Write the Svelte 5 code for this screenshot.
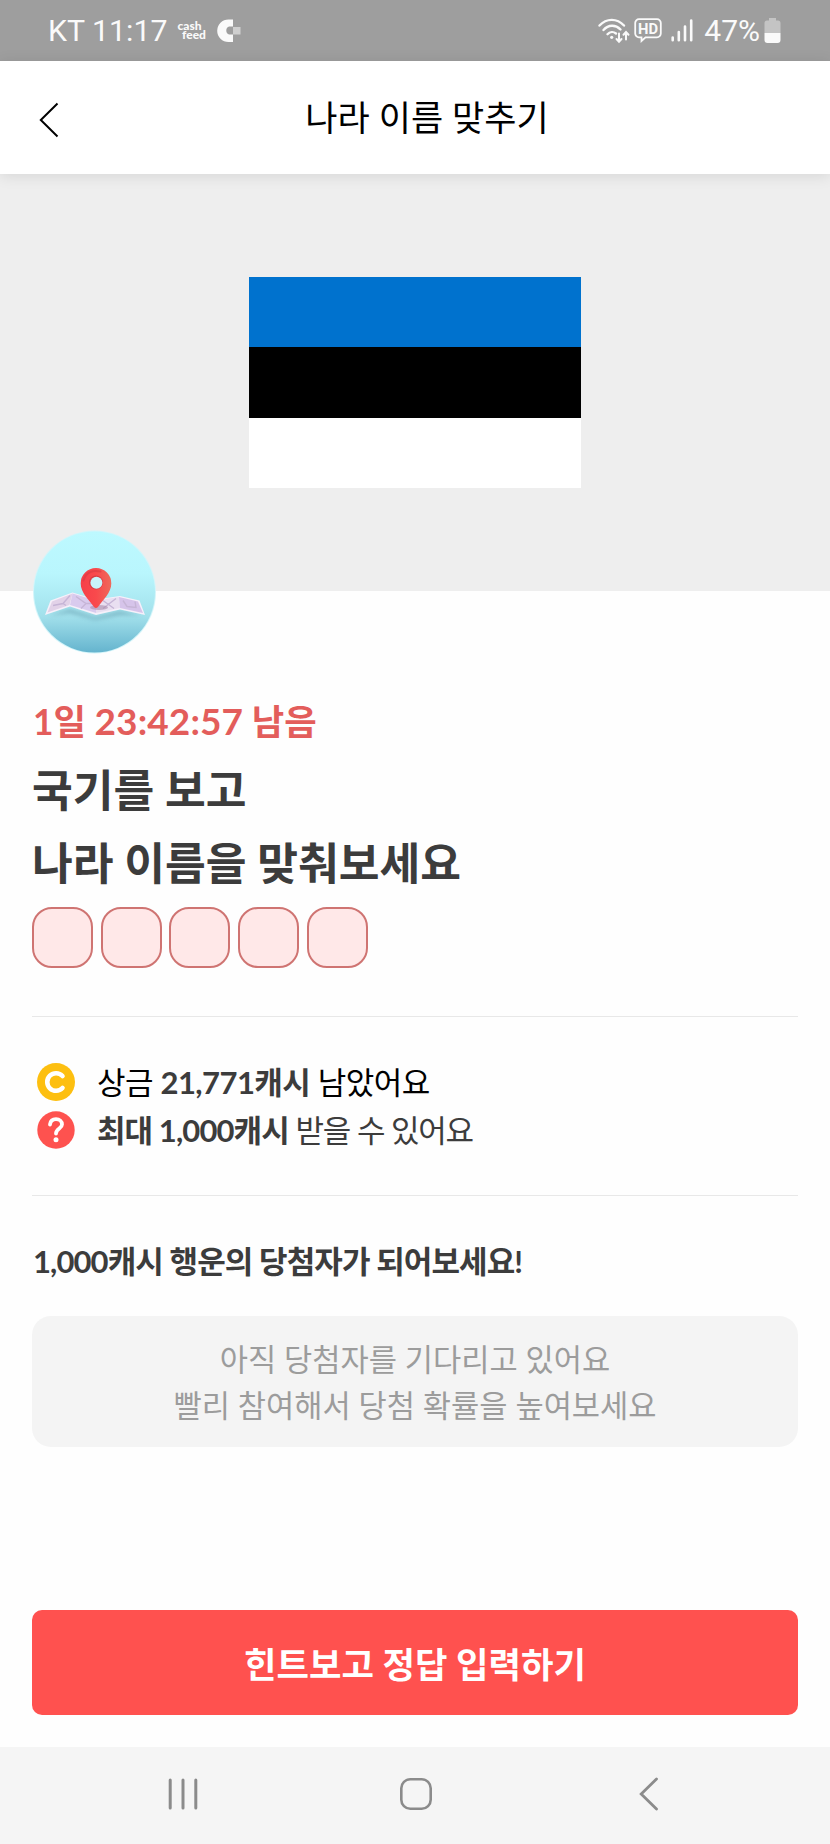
<script>
  let answerLength = 5;
  let timeLeft = "23:42:57";
  let remain = "21,771";
  let prize = "1,000";

  const slots = Array(answerLength).fill("");
</script>

<div class="screen">
  <div class="status">
    <div class="status-left">
      <span class="carrier">KT 11:17</span>
      <svg class="cashfeed" width="33" height="24" viewBox="0 0 33 24">
        <text><tspan x="0.500" y="10.500">cash</tspan><tspan x="5" y="19.500">feed</tspan></text>
      </svg>
      <svg class="capp" width="24" height="24" viewBox="0 0 24 24">
        <path d="M16 0.500H11.500a11.300 11.300 0 0 0 0 22.600H16V15.500H12.200a4.200 4.200 0 0 1 0-8H16z" fill="#fafafa" />
        <rect x="16" y="8" width="7.500" height="7.500" fill="#cfcfcf" />
      </svg>
    </div>
    <div class="status-right">
      <svg class="wifi" width="33" height="26" viewBox="0 0 33 26" fill="none" stroke="#fafafa" stroke-width="2.400" stroke-linecap="round">
        <path d="M1.500 7.500C8.500 0 19 0 26 7.500" />
        <path d="M5.500 12C10.500 6.500 17.500 6.500 22.500 11.500" />
        <path d="M9.500 16.200C12 13.500 15.500 13.500 18 15.500" />
        <circle cx="13.700" cy="19.300" r="1.600" fill="#fafafa" stroke="none" />
        <path d="M21 15.500V23.500M18.500 21L21 23.700L23.500 21" stroke-width="2" />
        <path d="M28 21.500V14.500M25.500 16.700L28 14L30.500 16.700" stroke-width="2" />
      </svg>
      <svg class="hd" width="28" height="25" viewBox="0 0 28 25">
        <path d="M5 1.200H23a3.800 3.800 0 0 1 3.800 3.800V15.500a3.800 3.800 0 0 1-3.800 3.800H11.500L7.500 23V19.300H5A3.800 3.800 0 0 1 1.200 15.500V5A3.800 3.800 0 0 1 5 1.200Z" fill="none" stroke="#fafafa" stroke-width="1.800" />
        <text x="14" y="16" text-anchor="middle" textLength="20" lengthAdjust="spacingAndGlyphs">HD</text>
      </svg>
      <svg class="signal" width="22" height="23" viewBox="0 0 22 23" stroke="#fafafa" stroke-width="2.600" stroke-linecap="round">
        <path d="M1.700 18.500V21.300M7.800 13V21.300M14 7.500V21.300M20.200 1.500V21.300" />
      </svg>
      <span class="percent">47%</span>
      <svg width="17" height="25" viewBox="0 0 17 25">
        <path d="M5 0H12V2.500H14a2.500 2.500 0 0 1 2.500 2.500V15H0.500V5A2.500 2.500 0 0 1 3 2.500H5Z" fill="#c4c4c4" />
        <path d="M0.500 15H16.500V22a3 3 0 0 1-3 3H3.500a3 3 0 0 1-3-3Z" fill="#fafafa" />
      </svg>
    </div>
  </div>

  <header>
    <svg class="back" width="20" height="36" viewBox="0 0 20 36" fill="none" stroke="#000" stroke-width="2">
      <path d="M18.500 1.500L1.800 18L18.500 34.500" />
    </svg>
    <h1>나라 이름 맞추기</h1>
  </header>

  <div class="hero">
    <div class="flag">
      <div class="blue"></div>
      <div class="black"></div>
      <div class="white"></div>
    </div>
    <svg class="badge" width="124" height="124" viewBox="0 0 124 124">
      <defs>
        <linearGradient id="sky" x1="0" y1="0" x2="0" y2="1">
          <stop offset="0" stop-color="#bdf9ff" />
          <stop offset="0.350" stop-color="#b9f6fd" />
          <stop offset="0.700" stop-color="#a2e0eb" />
          <stop offset="1" stop-color="#65b4ce" />
        </linearGradient>
        <linearGradient id="pin" x1="0" y1="0" x2="1" y2="0">
          <stop offset="0" stop-color="#f5404a" />
          <stop offset="0.500" stop-color="#f9494c" />
          <stop offset="1" stop-color="#ee6a5c" />
        </linearGradient>
        <filter id="soft" x="-20%" y="-50%" width="140%" height="200%">
          <feGaussianBlur stdDeviation="2" />
        </filter>
      </defs>
      <circle cx="62.500" cy="62" r="61.500" fill="#d3f5fa" />
      <circle cx="62.500" cy="62" r="60.500" fill="url(#sky)" />
      <g transform="translate(0 1.500)">
        <path d="M17 84L38 78L63 86L88 80L110 84L88 83L63 88L38 81Z" fill="#5c93a5" opacity="0.700" filter="url(#soft)" />
        <path d="M18.500 69L40.500 61L64 68L88 64.500L107.500 69L113 83.500L88 78L64 83.500L38 75L13 83.500Z" fill="#f6f0fa" />
        <path d="M20 70L40.500 62L37.500 73.500L15.500 81Z" fill="#e2d2e8" />
        <path d="M40.500 62L64 69V81.500L38 73.500Z" fill="#d9cbee" />
        <path d="M64 69L87 65.500L88 76.500L64 81.500Z" fill="#e9dff1" />
        <path d="M87 65.500L106 70L111 81.500L88 76.500Z" fill="#d6c4ea" />
        <path d="M21 74L31 72L38 64M31 72L34 74M44 65L54 72L64 72M54 72L49 77M71 69L82 77M71 77L84 67M91 69L95 75L104 76L103 70" fill="none" stroke="#c6b5d6" stroke-width="1.400" />
        <ellipse cx="67" cy="76" rx="9" ry="2.500" fill="#a88cab" opacity="0.600" />
        <path d="M64 36.500a15.300 15.300 0 0 1 15.300 15.500C79.500 61 70.500 69 66 75.500Q64 77.500 62 75.500C57.500 69 48.500 61 48.700 52A15.300 15.300 0 0 1 64 36.500Z" fill="url(#pin)" />
        <path d="M51.500 49C53.500 41 60.500 38 68.500 40" fill="none" stroke="#d93a42" stroke-width="2" stroke-linecap="round" opacity="0.600" />
        <circle cx="64" cy="51" r="7" fill="#d83c43" />
        <circle cx="64.400" cy="51.300" r="6" fill="#c8f3fa" />
      </g>
    </svg>
  </div>

  <main>
    <p class="timer">1일 <span>{timeLeft}</span> 남음</p>
    <h2>국기를 보고<br />나라 이름을 맞춰보세요</h2>
    <div class="slots">
      {#each slots as s}
        <div class="slot">{s}</div>
      {/each}
    </div>

    <div class="info">
      <div class="row first">
        <svg width="38" height="38" viewBox="0 0 38 38">
          <circle cx="19" cy="19" r="19" fill="#fdbf10" />
          <path d="M25.500 13A8.800 8.800 0 1 0 25.500 25" fill="none" stroke="#fff" stroke-width="4.600" stroke-linecap="round" />
        </svg>
        <p>상금 <b>{remain}캐시</b> 남았어요</p>
      </div>
      <div class="row">
        <svg width="38" height="38" viewBox="0 0 38 38">
          <circle cx="19" cy="19" r="18.700" fill="#fe524f" />
          <path d="M13 13.500C13.500 9.500 16 8.200 19 8.200C22.500 8.200 25 10.200 25 13.500C25 17.500 19 17.500 19 22.500" fill="none" stroke="#fff" stroke-width="3.800" stroke-linecap="round" />
          <circle cx="19" cy="28.800" r="2.500" fill="#fff" />
        </svg>
        <p><b>최대 {prize}캐시</b> 받을 수 있어요</p>
      </div>
    </div>

    <h3>{prize}캐시 행운의 당첨자가 되어보세요!</h3>
    <div class="empty">
      아직 당첨자를 기다리고 있어요<br />
      빨리 참여해서 당첨 확률을 높여보세요
    </div>

    <button>힌트보고 정답 입력하기</button>
  </main>

  <nav>
    <svg width="30" height="32" viewBox="0 0 30 32" stroke="#8b8b8b" stroke-width="3" stroke-linecap="round">
      <path d="M2.200 2V30M15 2V30M27.800 2V30" />
    </svg>
    <svg class="home" width="32" height="32" viewBox="0 0 32 32">
      <rect x="1.300" y="1.300" width="29.400" height="29.400" rx="9" fill="none" stroke="#8b8b8b" stroke-width="2.600" />
    </svg>
    <svg width="20" height="34" viewBox="0 0 20 34" fill="none" stroke="#8b8b8b" stroke-width="2.800" stroke-linecap="round">
      <path d="M17.500 2L2.200 17L17.500 32" />
    </svg>
  </nav>
</div>

<style>
  :global(body) {
    margin: 0;
    background: #fff;
  }

  .screen {
    width: 830px;
    height: 1844px;
    display: flex;
    flex-direction: column;
    background: #fefefe;
    font-family: Lato, "Noto Sans CJK KR", sans-serif;
    color: #3c3c3c;
    overflow: hidden;
  }

  h1, h2, h3, p {
    margin: 0;
  }

  svg {
    display: block;
    flex: none;
  }

  .status {
    height: 61px;
    flex: none;
    box-sizing: border-box;
    padding: 0 48px;
    display: flex;
    justify-content: space-between;
    background: #9e9e9e;
    color: #fafafa;
    font-family: Roboto, sans-serif;
    font-size: 30px;
  }

  .status-left, .status-right {
    display: flex;
    align-items: center;
  }

  .status-right {
    padding-right: 1px;
  }

  .carrier {
    font-size: 30.300px;
  }

  .cashfeed {
    margin-left: 10px;
  }

  .cashfeed text {
    font: 900 12px Lato, sans-serif;
    fill: #fafafa;
  }

  .capp {
    margin-left: 7px;
  }

  .hd {
    margin-left: 3px;
  }

  .hd text {
    font: 700 15px Roboto, sans-serif;
    fill: #fafafa;
  }

  .signal {
    margin: 0 11px 0 9px;
  }

  .percent {
    margin-right: 4px;
  }

  header {
    height: 113px;
    flex: none;
    box-sizing: border-box;
    padding-left: 24px;
    display: flex;
    align-items: center;
    justify-content: center;
    position: relative;
    background: #fff;
    box-shadow: 0 2px 14px rgba(0, 0, 0, 0.1);
    z-index: 1;
  }

  .back {
    position: absolute;
    left: 39px;
    top: 41px;
  }

  h1 {
    font-size: 35px;
    line-height: 50px;
    margin-top: -1px;
    font-weight: 400;
    color: #000;
  }

  .hero {
    height: 417px;
    flex: none;
    position: relative;
    display: flex;
    justify-content: center;
    align-items: flex-start;
    box-sizing: border-box;
    padding-top: 103px;
    background: #eee;
  }

  .flag {
    width: 332px;
    height: 211px;
    display: flex;
    flex-direction: column;
  }

  .flag div {
    flex: 1;
  }

  .blue {
    background: #0072ce;
  }

  .black {
    background: #000;
  }

  .white {
    background: #fff;
  }

  .badge {
    position: absolute;
    left: 32px;
    bottom: -63px;
  }

  main {
    flex: 1;
    display: flex;
    flex-direction: column;
    padding: 106px 32px 0;
  }

  .timer {
    height: 50px;
    padding-left: 1px;
    font-size: 35.300px;
    line-height: 50px;
    font-weight: 700;
    color: #e35d5b;
  }

  .timer span {
    font-size: 37px;
    line-height: 1;
    letter-spacing: 0.100px;
  }

  h2 {
    margin-top: 6px;
    font-size: 44.300px;
    line-height: 73px;
    font-weight: 700;
  }

  .slots {
    display: flex;
    gap: 7.700px;
    margin-top: 8px;
  }

  .slot {
    box-sizing: border-box;
    width: 61px;
    height: 61px;
    border: 2px solid #cf7472;
    border-radius: 20px;
    background: #ffe8e8;
  }

  .info {
    margin-top: 48px;
    padding: 41px 0;
    border: solid #e8e8e8;
    border-width: 1px 0;
  }

  .row {
    display: flex;
    align-items: center;
    height: 48px;
    padding-left: 5px;
    gap: 22px;
  }

  .row p {
    font-size: 31px;
    letter-spacing: -1.200px;
    line-height: 48px;
    white-space: nowrap;
  }

  .row b {
    color: #3c3c3c;
    letter-spacing: -0.900px;
  }

  .first p {
    color: #000;
    letter-spacing: -0.500px;
  }

  .first b {
    letter-spacing: -0.550px;
  }

  h3 {
    margin-top: 41px;
    padding-left: 1px;
    font-size: 31px;
    line-height: 48px;
    letter-spacing: -0.900px;
  }

  .empty {
    margin-top: 31px;
    height: 131px;
    box-sizing: border-box;
    padding-top: 21px;
    border-radius: 19px;
    background: #f4f4f4;
    color: #9c9c9c;
    font-size: 30.700px;
    line-height: 46px;
    text-align: center;
  }

  button {
    margin-top: 163px;
    height: 105px;
    border: 0;
    border-radius: 10px;
    background: #ff514f;
    color: #fff;
    font: inherit;
    font-size: 35.300px;
    font-weight: 700;
  }

  nav {
    height: 97px;
    flex: none;
    box-sizing: border-box;
    padding: 0 171px 3px 168px;
    display: flex;
    align-items: center;
    justify-content: space-between;
    background: #f5f5f5;
  }

  .home {
    margin-right: 6px;
  }
</style>
